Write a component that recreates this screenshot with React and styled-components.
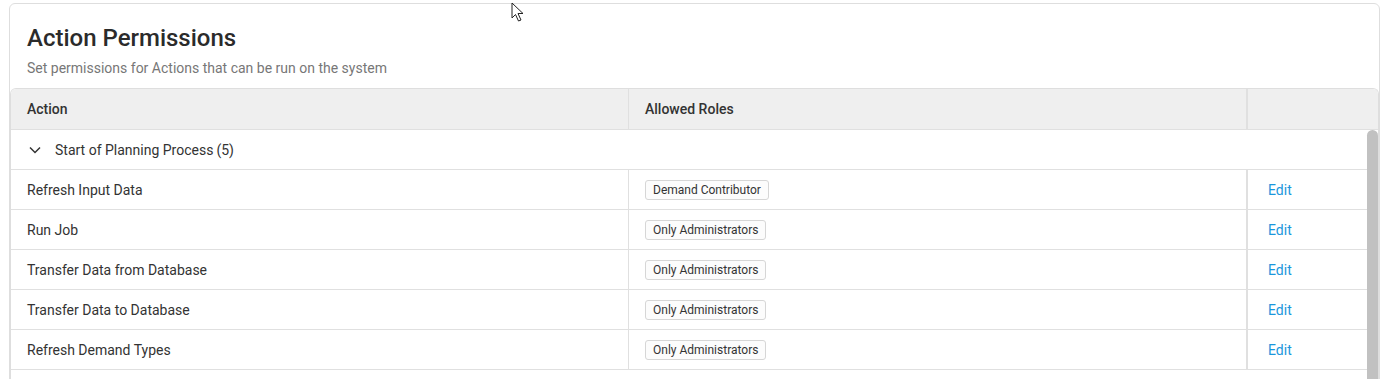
import React from "react";
import styled, { createGlobalStyle } from "styled-components";

const GlobalStyle = createGlobalStyle`
    html, body {
        margin: 0;
        padding: 0;
        overflow: hidden;
        background: #fff;
        font-family: Roboto, "Liberation Sans", sans-serif;
        color: #333;
    }
`;

const Page = styled.div`
    position: relative;
    padding: 3px 8px 0 9px;
`;

const Card = styled.div`
    border: 1px solid #dedede;
    border-radius: 6px;
    background: #fff;
`;

const Header = styled.div`
    padding: 20px 16px 10px 17px;
`;

const Title = styled.h1`
    margin: 0;
    font-size: 24px;
    line-height: 28px;
    font-weight: 500;
    color: #2b2b2b;
`;

const Subtitle = styled.div`
    margin-top: 6px;
    font-size: 14px;
    line-height: 20px;
    color: #777;
`;

const Table = styled.div`
    border: 1px solid #dedede;
    border-bottom: none;
    border-radius: 6px 6px 0 0;
    overflow: hidden;
`;

const Row = styled.div`
    display: grid;
    grid-template-columns: 618px 1fr ${p => p.$lastWidth}px;
    height: ${p => p.$head ? 41 : 40}px;
    box-sizing: border-box;
    border-bottom: 1px solid #e0e0e0;
    background: ${p => p.$head ? "#efefef" : "#fff"};
    font-size: 14px;
    font-weight: ${p => p.$head ? 500 : 400};
    color: #333;
`;

const Cell = styled.div`
    display: flex;
    align-items: center;
    padding-left: ${p => p.$pad || 16}px;
    border-right: ${p => p.$divider ? "1px solid #e0e0e0" : "none"};
    border-left: ${p => p.$thick ? "2px solid #e0e0e0" : "none"};
    min-width: 0;
`;

const Body = styled.div`
    display: flex;
    height: 260px;
`;

const Rows = styled.div`
    flex: 1;
    min-width: 0;
`;

const ScrollTrack = styled.div`
    width: 11px;
    flex-shrink: 0;
    background: #fff;
`;

const ScrollThumb = styled.div`
    height: 100%;
    background: #c1c1c1;
    border-radius: 6px 6px 0 0;
`;

const GroupRow = styled.div`
    display: flex;
    align-items: center;
    height: 40px;
    box-sizing: border-box;
    border-bottom: 1px solid #e0e0e0;
    padding-left: 18px;
    font-size: 14px;
    color: #333;
`;

const Chevron = styled.svg`
    width: 12px;
    height: 8px;
    margin-right: 14px;
`;

const Count = styled.span`
    margin-left: 3px;
`;

const Tag = styled.span`
    display: inline-flex;
    align-items: center;
    height: 20px;
    box-sizing: border-box;
    padding: 0 7px;
    border: 1px solid #d6d6d6;
    border-radius: 3px;
    background: #fcfcfc;
    font-size: 12px;
    color: #333;
`;

const EditLink = styled.a`
    color: #1a96dc;
    font-size: 14px;
    text-decoration: none;
    cursor: pointer;
`;

const Cursor = styled.svg`
    position: absolute;
    left: 511px;
    top: 2px;
    width: 14px;
    height: 21px;
`;

const actions = [
    { name: "Refresh Input Data", role: "Demand Contributor" },
    { name: "Run Job", role: "Only Administrators" },
    { name: "Transfer Data from Database", role: "Only Administrators" },
    { name: "Transfer Data to Database", role: "Only Administrators" },
    { name: "Refresh Demand Types", role: "Only Administrators" },
];

const App = () => (
    <Page>
        <GlobalStyle />
        <Card>
            <Header>
                <Title>Action Permissions</Title>
                <Subtitle>Set permissions for Actions that can be run on the system</Subtitle>
            </Header>
            <Table>
                <Row $head $lastWidth={132}>
                    <Cell $divider>Action</Cell>
                    <Cell>Allowed Roles</Cell>
                    <Cell $thick />
                </Row>
                <Body>
                    <Rows>
                        <GroupRow>
                            <Chevron viewBox="0 0 12 8">
                                <polyline points="1,1.5 6,6.5 11,1.5" fill="none" stroke="#333" strokeWidth="1.5" />
                            </Chevron>
                            Start of Planning Process<Count>(5)</Count>
                        </GroupRow>
                        {actions.map(a => (
                            <Row key={a.name} $lastWidth={121}>
                                <Cell $divider>{a.name}</Cell>
                                <Cell><Tag>{a.role}</Tag></Cell>
                                <Cell $thick $pad={20}><EditLink>Edit</EditLink></Cell>
                            </Row>
                        ))}
                    </Rows>
                    <ScrollTrack>
                        <ScrollThumb />
                    </ScrollTrack>
                </Body>
            </Table>
        </Card>
        <Cursor viewBox="0 0 14 21">
            <path d="M1 1 L1 16 L4.5 12.5 L7.5 19 L10 18 L7 11.5 L12 11.5 Z" fill="#fff" stroke="#222" strokeWidth="1" strokeLinejoin="round" />
        </Cursor>
    </Page>
);

export default App;
